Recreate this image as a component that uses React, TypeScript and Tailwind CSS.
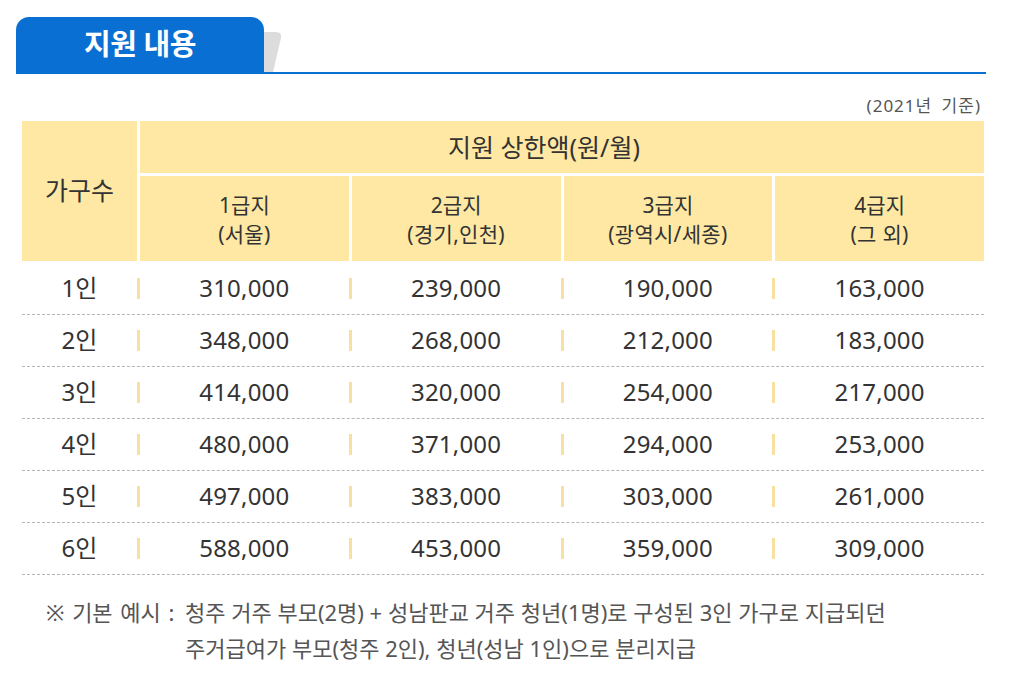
import React from "react";

const font = { fontFamily: '"Noto Sans", "Noto Sans CJK KR", sans-serif' };

const rows = [
  ["1인", "310,000", "239,000", "190,000", "163,000"],
  ["2인", "348,000", "268,000", "212,000", "183,000"],
  ["3인", "414,000", "320,000", "254,000", "217,000"],
  ["4인", "480,000", "371,000", "294,000", "253,000"],
  ["5인", "497,000", "383,000", "303,000", "261,000"],
  ["6인", "588,000", "453,000", "359,000", "309,000"],
];

const grades = [
  ["1급지", "(서울)"],
  ["2급지", "(경기,인천)"],
  ["3급지", "(광역시/세종)"],
  ["4급지", "(그 외)"],
];

function Sep() {
  return <div className="w-[3px] h-[21px] self-center bg-[#f7e0a0]" />;
}

export default function App() {
  return (
    <div className="w-[1014px] h-[673px] bg-white text-[#333] overflow-hidden" style={font}>
      <div className="pt-[17px] pl-[16px]">
        <div className="flex items-end w-[970px] border-b-2 border-[#0a6fd3]">
          <div className="w-[248px] h-[55px] bg-[#0a6fd3] rounded-t-[13px] flex items-center justify-center text-white text-[29px] font-semibold tracking-[-0.5px] pb-[2px]">
            지원 내용
          </div>
          <svg width="20" height="40" viewBox="0 0 20 40" className="block">
            <path d="M0 0 L12 0 Q18 0 17 6 L9 40 L0 40 Z" fill="#dcdcdc" />
          </svg>
        </div>
      </div>
      <div className="ml-[22px] w-[962px]">
        <div className="mt-[21px] mb-[5px] h-[21px] text-right pr-[3px] text-[17px] leading-[21px] tracking-[1px] [word-spacing:4px] text-[#555]">
          (2021년 기준)
        </div>
        <div className="grid grid-cols-[115px_1fr_1fr_1fr_1fr] grid-rows-[52px_85px] gap-[3px]">
          <div className="row-span-2 bg-[#fee8a3] flex items-center justify-center text-[25px]">
            가구수
          </div>
          <div className="col-span-4 bg-[#fee8a3] flex items-center justify-center text-[25px] pt-[1px] pr-[36px]">
            지원 상한액(원/월)
          </div>
          {grades.map(([a, b]) => (
            <div
              key={a}
              className="bg-[#fee8a3] flex flex-col items-center justify-center text-[21px] leading-[29px] pt-[2px]"
            >
              <div>{a}</div>
              <div className="tracking-[0.3px]">{b}</div>
            </div>
          ))}
        </div>
        <div className="mt-[1px]">
          {rows.map((r, i) => (
            <div
              key={r[0]}
              className={`grid grid-cols-[115px_3px_1fr_3px_1fr_3px_1fr_3px_1fr] ${i === 0 ? "h-[53px] pt-[1px]" : "h-[52px]"} border-b border-dashed border-[#b5b5b5] text-[24px] tracking-[0.2px]`}
            >
              <div className="flex items-center justify-center pb-[2px]">{r[0]}</div>
              <Sep />
              <div className="flex items-center justify-center pb-[2px]">{r[1]}</div>
              <Sep />
              <div className="flex items-center justify-center pb-[2px]">{r[2]}</div>
              <Sep />
              <div className="flex items-center justify-center pb-[2px]">{r[3]}</div>
              <Sep />
              <div className="flex items-center justify-center pb-[2px]">{r[4]}</div>
            </div>
          ))}
        </div>
      </div>
      <div className="mt-[19px] pl-[46px] flex text-[22px] leading-[36px] text-[#555]">
        <div className="w-[139px] shrink-0 whitespace-nowrap [word-spacing:2px]">※ 기본 예시 :</div>
        <div className="whitespace-nowrap">
          <div>청주 거주 부모(2명) + 성남판교 거주 청년(1명)로 구성된 3인 가구로 지급되던</div>
          <div>주거급여가 부모(청주 2인), 청년(성남 1인)으로 분리지급</div>
        </div>
      </div>
    </div>
  );
}
